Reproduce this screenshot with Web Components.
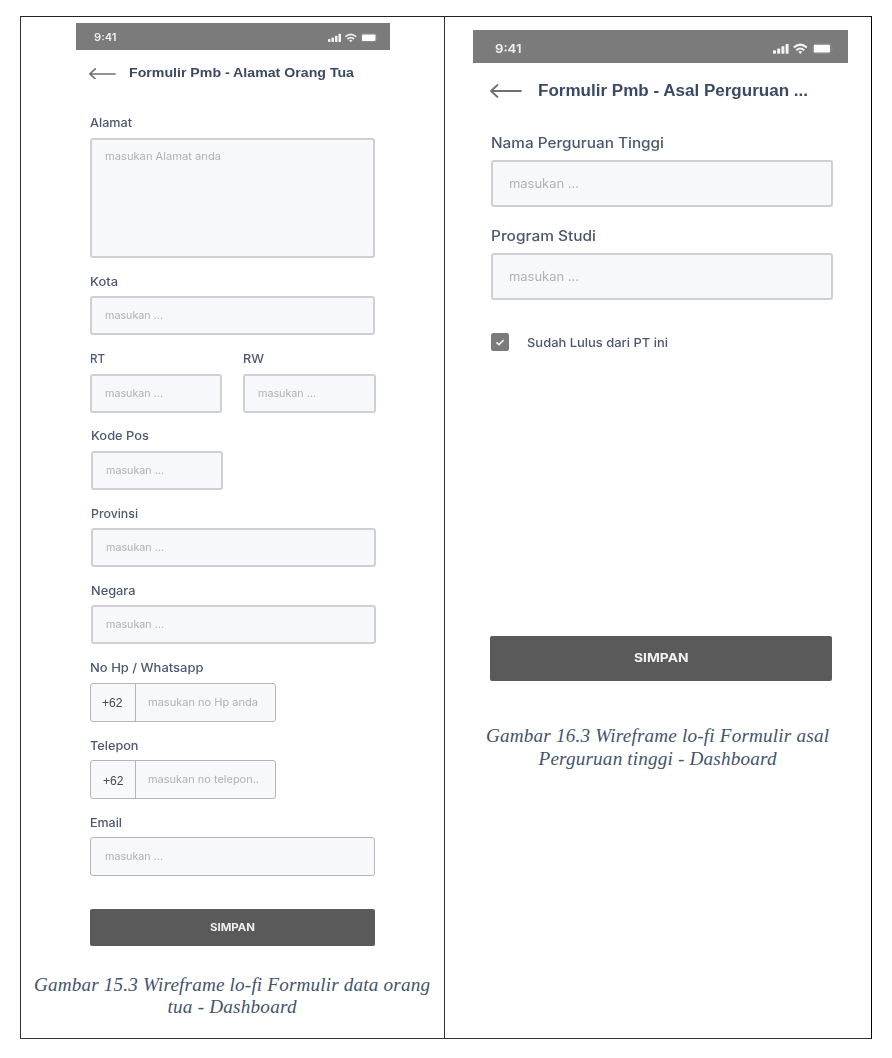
<!DOCTYPE html>
<html lang="id">
<head>
<meta charset="utf-8">
<title>Wireframe Formulir PMB</title>
<style>
html,body{margin:0;background:#fff}
body{width:892px;height:1058px;overflow:hidden}
</style>
</head>
<body>
<wire-document></wire-document>
<script>
const define = (name, html, setup) => customElements.define(name, class extends HTMLElement {
  connectedCallback() {
    if (this.shadowRoot) return;
    const root = this.attachShadow({ mode: 'open' });
    const t = document.createElement('template');
    t.innerHTML = typeof html === 'function' ? html(this) : html;
    root.append(t.content.cloneNode(true));
    if (setup) setup(this, root);
  }
});

/* A single line of text that spans the width given in "w": its glyphs are
   widened, or with the "track" attribute only its letter spacing changes. */
define('fit-text', '<style>:host{display:block;white-space:nowrap;width:max-content}span{display:inline-block;transform-origin:0 50%}</style><span><slot></slot></span>', (el, root) => {
  const span = root.querySelector('span'), n = el.textContent.length, w = +el.getAttribute('w');
  const natural = span.getBoundingClientRect().width;
  if (el.hasAttribute('track')) span.style.letterSpacing = ((w - natural) / (n - 1)).toFixed(3) + 'px';
  else span.style.transform = `scaleX(${(w / natural).toFixed(4)})`;
  el.style.width = w + 'px';
});

define('status-bar', el => `<style>
:host{display:flex;align-items:center;justify-content:space-between;box-sizing:border-box;height:var(--bar-h);background:#7b7b7b;color:#f1f1f1;padding:var(--bar-pad);font:600 var(--bar-fs)/1.2 Inter,sans-serif}
svg{display:block;width:var(--sig-w);height:auto}
</style><fit-text w="${el.getAttribute('tw')}">9:41</fit-text>
<svg viewBox="0 0 60 12" fill="#f4f4f4"><rect x="0" y="7.3" width="3" height="3.4" rx=".7"/><rect x="4.2" y="5.5" width="3" height="5.2" rx=".7"/><rect x="8.4" y="3.3" width="3" height="7.4" rx=".7"/><rect x="12.6" y="1" width="3" height="9.7" rx=".7"/>
<g fill="none" stroke="#f4f4f4" stroke-width="2"><path d="M20.8 4.5Q27.3-1.3 33.8 4.5"/><path d="M23.3 7.2Q27.3 3.7 31.3 7.2"/></g><path d="M25.2 8.7Q27.3 7.2 29.4 8.7L27.3 11Z"/>
<rect x="39.9" y=".9" width="18" height="9.6" rx="2.4" fill="none" stroke="#8f8f8f" stroke-width=".8"/><rect x="40.8" y="1.8" width="16.2" height="7.8" rx="1.3" fill="#fff"/><path d="M58.8 4.2q1.3 1.5 0 3z" fill="#999"/></svg>`);

define('title-bar', el => `<style>
:host{display:flex;align-items:center;height:var(--title-h);padding-left:var(--title-pad);color:#3c4963;font:700 var(--title-fs)/1.2 "Liberation Sans",sans-serif}
svg{display:block;width:var(--arrow-w);margin-right:var(--arrow-gap)}
</style><svg viewBox="0 0 32 14" fill="none" stroke="#707070" stroke-width="1.8" stroke-linecap="round" stroke-linejoin="round"><path d="M31 7H1M7.5 1L1 7L7.5 13"/></svg><fit-text w="${el.getAttribute('tw')}">${el.getAttribute('text')}</fit-text>`);

define('form-field', el => {
  const a = n => el.getAttribute(n);
  const thin = a('prefix') || a('thin') !== null;
  return `<style>
:host{display:block;box-sizing:border-box;margin-bottom:var(--field-gap);margin-left:${a('dx') || 0}px;width:${a('width')}px}
.label{height:var(--label-h);line-height:var(--label-h);margin-bottom:${a('gap') ? a('gap') + 'px' : 'var(--label-gap)'};color:#4b5872;font-family:Inter,sans-serif;font-weight:500;font-size:var(--label-fs)}
.label fit-text{position:relative;top:.6px}
.box{display:flex;box-sizing:border-box;height:${a('height') ? a('height') + 'px' : 'var(--box-h)'};border:${thin ? '1px solid #b4b5b7' : '2px solid #cfd0d1'};border-radius:3px;background:#f6f8fc}
.prefix{box-sizing:border-box;display:flex;justify-content:center;align-items:center;width:45px;border-right:1px solid #b4b5b7;color:#484848;font:12px/1 "Liberation Sans",sans-serif;padding-top:2px}
.value{flex:1;display:flex;align-items:${a('height') ? 'flex-start' : 'center'};padding-left:${a('prefix') ? '12px' : thin ? '13.5px' : 'var(--box-pad)'};padding-top:${a('height') ? '10px' : '0'};color:#b0b1b4;font:400 var(--ph-fs)/13px Inter,sans-serif}
</style><div class="label"><fit-text w="${a('lw')}">${a('label')}</fit-text></div><div class="box">${a('prefix') ? `<div class="prefix"><fit-text w="20.5">${a('prefix')}</fit-text></div>` : ''}<div class="value"><fit-text w="${a('pw')}">${a('placeholder')}</fit-text></div></div>`;
});

define('check-row', `<style>
:host{display:flex;align-items:center;height:18px;color:#4b5872;font:500 12.3px/18px Inter,sans-serif}
svg{display:block;margin-right:18px}fit-text{padding-top:2px}
</style><svg width="18" height="18" viewBox="0 0 18 18"><rect width="18" height="18" rx="2.5" fill="#7b7b7b"/><path d="M5.5 9.3L8 11.6L12.7 7" fill="none" stroke="#eee" stroke-width="1.7"/></svg><fit-text w="141">Sudah Lulus dari PT ini</fit-text>`);

define('submit-button', el => `<style>
:host{display:flex;box-sizing:border-box;align-items:center;justify-content:center;height:var(--btn-h);border-radius:2px;background:#5a5a5a;color:#f0f0f0;font:700 var(--btn-fs)/1.2 Inter,sans-serif}
</style><fit-text w="${el.getAttribute('tw')}">SIMPAN</fit-text>`);

define('figure-caption', `<style>
:host{display:flex;flex-direction:column;align-items:center;color:#44546a;font:italic 19.2px/var(--cap-lh,22px) "Liberation Serif",serif}
</style><slot></slot>`);

define('phone-screen', `<style>:host{display:block;filter:blur(.45px)}</style><slot></slot>`);

define('address-form', `<style>
:host{display:block;--bar-h:27px;--bar-pad:2px 12px 0 18px;--bar-fs:9.9px;--sig-w:50px;--title-h:47px;--title-pad:13px;--title-fs:13.6px;--arrow-w:27px;--arrow-gap:13px;
--label-h:16px;--label-gap:7px;--label-fs:11.9px;--box-h:39px;--box-pad:13px;--ph-fs:10.7px;--field-gap:15.3px;--btn-h:37px;--btn-fs:10.4px}
phone-screen{width:314px;margin-left:55px;margin-top:6px}
.fields{margin:17px 0 0 14px;width:286px}
.row{display:flex;justify-content:space-between}
submit-button{margin:33px 0 0;width:285px}
figure-caption{margin-top:28px;margin-left:-1px}
</style>
<phone-screen>
<status-bar tw="22.5"></status-bar>
<title-bar tw="225" text="Formulir Pmb - Alamat Orang Tua"></title-bar>
<div class="fields">
<form-field label="Alamat" lw="42" placeholder="masukan Alamat anda" pw="116" height="120" gap="8" width="285"></form-field>
<form-field label="Kota" lw="28" placeholder="masukan ..." pw="58" width="285"></form-field>
<div class="row"><form-field label="RT" lw="15" placeholder="masukan ..." pw="58" width="132"></form-field><form-field label="RW" lw="21" placeholder="masukan ..." pw="58" width="133"></form-field></div>
<form-field label="Kode Pos" lw="58" placeholder="masukan ..." pw="58" width="132" dx="1"></form-field>
<form-field label="Provinsi" lw="47" placeholder="masukan ..." pw="58" width="285" dx=".6"></form-field>
<form-field label="Negara" lw="44.5" placeholder="masukan ..." pw="58" width="285" dx=".6"></form-field>
<form-field label="No Hp / Whatsapp" lw="113.5" prefix="+62" placeholder="masukan no Hp anda" pw="110" width="186" dx="-.4"></form-field>
<form-field label="Telepon" lw="48.5" prefix="+62" placeholder="masukan no telepon.." pw="111" width="186" dx=".4"></form-field>
<form-field label="Email" lw="32" placeholder="masukan ..." pw="58" width="285" thin style="margin-bottom:0"></form-field>
<submit-button tw="45"></submit-button>
</div>
</phone-screen>
<figure-caption><fit-text track w="396">Gambar 15.3 Wireframe lo-fi Formulir data orang</fit-text><fit-text track w="129">tua - Dashboard</fit-text></figure-caption>`);

define('college-form', `<style>
:host{display:block;--bar-h:33px;--bar-pad:5px 15px 0 21.5px;--bar-fs:12px;--sig-w:60px;--title-h:56px;--title-pad:17px;--title-fs:16px;--arrow-w:32px;--arrow-gap:16px;
--label-h:18px;--label-gap:9px;--label-fs:14.2px;--box-h:47px;--box-pad:16px;--ph-fs:12.6px;--field-gap:19px;--btn-h:45px;--btn-fs:12.2px;--cap-lh:23px}
phone-screen{width:375px;margin-left:28px;margin-top:13px}
.fields{margin:14px 0 0 18px}
check-row{margin-top:33px}
submit-button{width:342px;margin:285px 0 0 -1px}
figure-caption{margin-top:43px;margin-left:-1px}
</style>
<phone-screen>
<status-bar tw="26.5"></status-bar>
<title-bar tw="270" text="Formulir Pmb - Asal Perguruan ..."></title-bar>
<div class="fields">
<form-field label="Nama Perguruan Tinggi" lw="173" placeholder="masukan ..." pw="70" width="342"></form-field>
<form-field label="Program Studi" lw="105" placeholder="masukan ..." pw="70" width="342" style="margin-bottom:0"></form-field>
<check-row></check-row>
<submit-button tw="54.5"></submit-button>
</div>
</phone-screen>
<figure-caption><fit-text track w="343">Gambar 16.3 Wireframe lo-fi Formulir asal</fit-text><fit-text track w="238">Perguruan tinggi - Dashboard</fit-text></figure-caption>`);

define('wire-document', `<style>
:host{display:grid;grid-template-columns:424px 427px;height:1023px;width:851px;margin:16px 0 0 20px}
.cell{display:flow-root;border-top:1px solid #222;border-bottom:1px solid #333;border-left:1px solid #333;box-sizing:border-box}
.cell+.cell{border-right:1px solid #000;width:428px}
</style><div class="cell"><address-form></address-form></div><div class="cell"><college-form></college-form></div>`);
</script>
</body>
</html>
